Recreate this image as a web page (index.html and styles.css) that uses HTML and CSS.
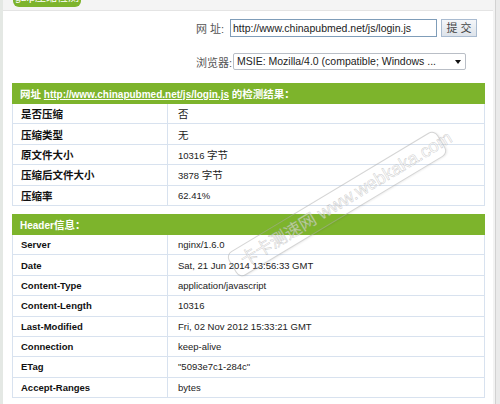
FILE: index.html
```html
<!DOCTYPE html>
<html>
<head>
<meta charset="utf-8">
<link rel="stylesheet" href="styles.css">
</head>
<body>
<div class="frame">
  <div class="lside"></div>
  <div class="main">
    <div class="topband"><div class="tab">gzip压缩检测</div></div>
    <div class="form">
      <div class="frow">
        <span class="flabel">网 址:</span>
        <div class="input">http://www.chinapubmed.net/js/login.js</div>
        <div class="btn">提 交</div>
      </div>
      <div class="frow row2">
        <span class="flabel">浏览器:</span>
        <div class="select"><span>MSIE: Mozilla/4.0 (compatible; Windows ...</span><i class="arrow"></i></div>
      </div>
    </div>
    <table class="tbl">
      <tr class="hd"><td colspan="2"><span class="cjk">网址</span> <a class="hlink">http://www.chinapubmed.net/js/login.js</a> <span class="cjk">的检测结果：</span></td></tr>
      <tr><td class="k cjk">是否压缩</td><td class="v"><span class="cjk">否</span></td></tr>
      <tr><td class="k cjk">压缩类型</td><td class="v"><span class="cjk">无</span></td></tr>
      <tr><td class="k cjk">原文件大小</td><td class="v">10316 <span class="cjk">字节</span></td></tr>
      <tr><td class="k cjk">压缩后文件大小</td><td class="v">3878 <span class="cjk">字节</span></td></tr>
      <tr><td class="k cjk">压缩率</td><td class="v">62.41%</td></tr>
    </table>
    <table class="tbl t2">
      <tr class="hd"><td colspan="2">Header<span class="cjk">信息：</span></td></tr>
      <tr><td class="k">Server</td><td class="v">nginx/1.6.0</td></tr>
      <tr><td class="k">Date</td><td class="v">Sat, 21 Jun 2014 13:56:33 GMT</td></tr>
      <tr><td class="k">Content-Type</td><td class="v">application/javascript</td></tr>
      <tr><td class="k">Content-Length</td><td class="v">10316</td></tr>
      <tr><td class="k">Last-Modified</td><td class="v">Fri, 02 Nov 2012 15:33:21 GMT</td></tr>
      <tr><td class="k">Connection</td><td class="v">keep-alive</td></tr>
      <tr><td class="k">ETag</td><td class="v">"5093e7c1-284c"</td></tr>
      <tr><td class="k">Accept-Ranges</td><td class="v">bytes</td></tr>
    </table>
    <div class="watermark"><span class="wcn">卡卡测速网</span> <span class="wen">www.webkaka.com</span></div>
  </div>
  <div class="rside"></div>
</div>
</body>
</html>
```

FILE: styles.css
```css
html, body {
  margin: 0;
  padding: 0;
  background: #ffffff;
  font-family: "Liberation Sans", "Noto Sans CJK SC", sans-serif;
  color: #222;
  overflow: hidden;
}
.frame {
  display: flex;
  height: 404px;
}
.lside {
  width: 3px;
  background: #e4e8e4;
}
.rside {
  width: 7px;
  background: linear-gradient(to right, #f3f3f3 0, #f3f3f3 2px, #d2d2d2 2px, #d2d2d2 3px, #eaeaea 3px);
}
.main {
  flex: 1;
  position: relative;
  overflow: hidden;
}
.topband {
  display: flow-root;
  height: 11px;
  background: #f4f4f4;
  border-bottom: 1px solid #e4e4e4;
  box-sizing: border-box;
}
.tab {
  margin-left: 10px;
  margin-top: -12px;
  width: 68px;
  height: 19px;
  background: #7db42c;
  border-radius: 0 0 6px 6px;
  color: #fff;
  font-size: 11px;
  line-height: 19px;
  text-align: center;
}
.form {
  padding: 8px 0 0 193px;
}
.frow {
  display: flex;
  align-items: center;
  height: 18px;
}
.row2 {
  margin-top: 16px;
  height: 17px;
}
.flabel {
  color: #555;
  font-size: 11px;
  width: 37px;
  white-space: nowrap;
}
.frow .flabel { width: 37px; }
.frow:first-child .flabel { width: 34px; }
.input {
  width: 207px;
  height: 18px;
  box-sizing: border-box;
  border: 1px solid #7f9db9;
  font-size: 10.5px;
  line-height: 16px;
  padding-left: 2px;
  color: #222;
  white-space: nowrap;
  overflow: hidden;
}
.btn {
  margin-left: 4px;
  width: 36px;
  height: 18px;
  box-sizing: border-box;
  border: 1px solid #a9bbd0;
  background: linear-gradient(#f4f6f9, #dde3ea);
  color: #444;
  font-size: 11px;
  line-height: 16px;
  text-align: center;
}
.select {
  width: 233px;
  height: 17px;
  box-sizing: border-box;
  border: 1px solid #b9bec6;
  border-radius: 2px;
  font-size: 10.5px;
  line-height: 15px;
  padding-left: 3px;
  display: flex;
  align-items: center;
  justify-content: space-between;
  color: #222;
  white-space: nowrap;
}
.arrow {
  width: 0;
  height: 0;
  border-left: 3.5px solid transparent;
  border-right: 3.5px solid transparent;
  border-top: 4px solid #111;
  margin-right: 4px;
}
.tbl {
  margin: 13px 0 0 9px;
  width: 473px;
  border-collapse: collapse;
  border: 1px solid #d8e2ef;
  font-size: 9.5px;
}
.t2 {
  margin-top: 8px;
}
.tbl td {
  border: 1px solid #d8e2ef;
  height: 19.4px;
  padding: 0;
  white-space: nowrap;
}
.tbl .hd td {
  background: #7db42c;
  border-color: #7db42c;
  color: #fff;
  font-weight: bold;
  font-size: 10px;
  padding-left: 7px;
  height: 19px;
}
.hlink {
  color: #fff;
  text-decoration: underline;
}
.tbl td.k {
  width: 146px;
  padding-left: 8px;
  font-weight: bold;
  color: #111;
}
.tbl td.v {
  padding-left: 10px;
  color: #222;
}
.cjk {
  font-size: 10.5px;
}
.watermark {
  position: absolute;
  left: 212px;
  top: 190px;
  width: 244px;
  height: 28px;
  box-sizing: border-box;
  border: 1px solid rgba(170, 170, 170, 0.5);
  border-radius: 7px;
  transform: rotate(-31deg);
  font-size: 18px;
  line-height: 26px;
  padding-left: 10px;
  color: rgba(255, 255, 255, 0.5);
  -webkit-text-stroke: 0.5px rgba(150, 150, 150, 0.5);
  white-space: nowrap;
  box-shadow: 1px 1px 2px rgba(0,0,0,0.07);
}
.wcn {
  font-size: 17px;
}
```
